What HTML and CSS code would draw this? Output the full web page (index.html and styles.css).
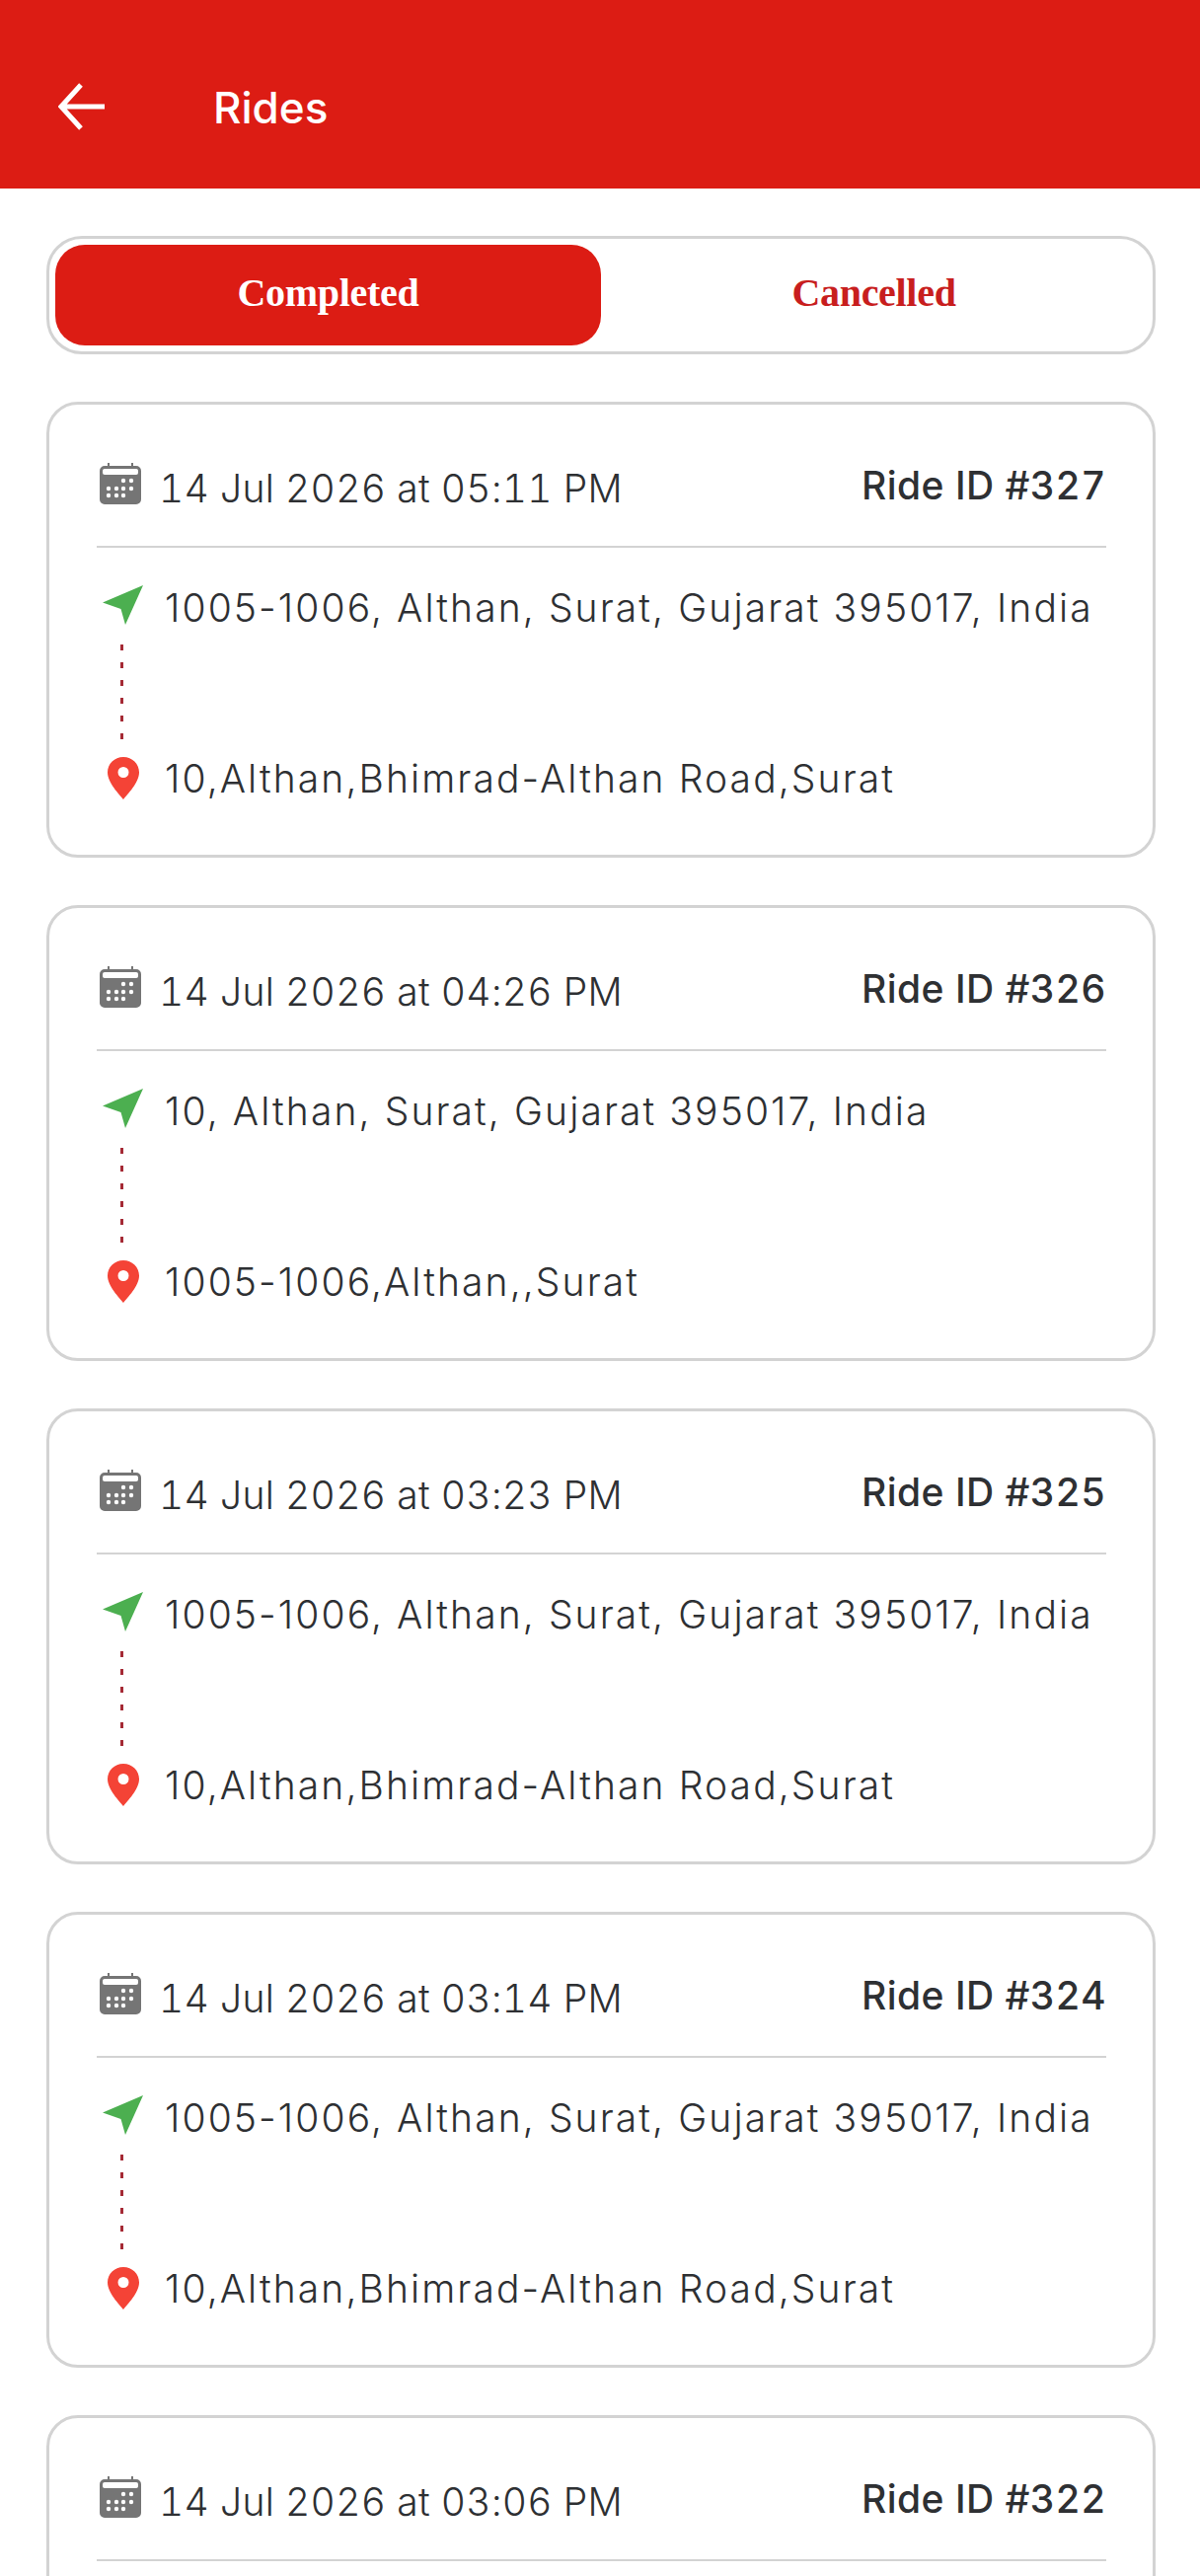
FILE: index.html
```html
<!DOCTYPE html>
<html lang="en">
<head>
<meta charset="utf-8">
<title>Rides</title>
<link rel="stylesheet" href="styles.css">
</head>
<body>
<svg class="defs" width="0" height="0" aria-hidden="true">
  <symbol id="i-cal" viewBox="0 0 42 42">
    <path fill="#757575" d="M8 0h2v3h22V0h2v3h3a5 5 0 0 1 5 5v29a5 5 0 0 1-5 5H5a5 5 0 0 1-5-5V8a5 5 0 0 1 5-5h3z"/>
    <rect x="3" y="6" width="36" height="6" rx="2" fill="#fff"/>
    <g fill="#fff">
      <circle cx="24" cy="18" r="2.2"/><circle cx="32" cy="18" r="2.2"/>
      <circle cx="9" cy="26" r="2.2"/><circle cx="17" cy="26" r="2.2"/><circle cx="24" cy="26" r="2.2"/><circle cx="32" cy="26" r="2.2"/>
      <circle cx="9" cy="33" r="2.2"/><circle cx="17" cy="33" r="2.2"/><circle cx="24" cy="33" r="2.2"/>
    </g>
  </symbol>
  <symbol id="i-nav" viewBox="0 0 41 40">
    <path fill="#4caf50" d="M41 0 23 40 18.500 24 0 17.500z"/>
  </symbol>
  <symbol id="i-pin" viewBox="0 0 32 43">
    <path fill="#f44336" fill-rule="evenodd" d="M16 0c9 0 16 7 16 15.500C32 26 20 38 16 43 12 38 0 26 0 15.500 0 7 7 0 16 0zm0 10a5.500 5.500 0 1 0 0 11 5.500 5.500 0 0 0 0-11z"/>
  </symbol>
</svg>

<header class="bar">
  <svg class="back" viewBox="0 0 48 48" width="48" height="48" aria-hidden="true"><path d="M47 24H4M23 2 3 24l20 22" fill="none" stroke="#fff" stroke-width="5"/></svg>
  <h1 class="title">Rides</h1>
</header>

<main class="content">
  <nav class="tabs">
    <div class="tab tab-on">Completed</div>
    <div class="tab">Cancelled</div>
  </nav>

  <article class="card">
    <div class="head">
      <div class="when"><svg class="ic-cal"><use href="#i-cal"/></svg><span>14 Jul 2026 at 05:11 PM</span></div>
      <div class="rid">Ride ID #327</div>
    </div>
    <div class="route">
      <div class="stop"><svg class="ic-nav"><use href="#i-nav"/></svg><span>1005-1006, Althan, Surat, Gujarat 395017, India</span></div>
      <div class="dots"></div>
      <div class="stop"><svg class="ic-pin"><use href="#i-pin"/></svg><span>10,Althan,Bhimrad-Althan Road,Surat</span></div>
    </div>
  </article>

  <article class="card">
    <div class="head">
      <div class="when"><svg class="ic-cal"><use href="#i-cal"/></svg><span>14 Jul 2026 at 04:26 PM</span></div>
      <div class="rid">Ride ID #326</div>
    </div>
    <div class="route">
      <div class="stop"><svg class="ic-nav"><use href="#i-nav"/></svg><span>10, Althan, Surat, Gujarat 395017, India</span></div>
      <div class="dots"></div>
      <div class="stop"><svg class="ic-pin"><use href="#i-pin"/></svg><span>1005-1006,Althan,,Surat</span></div>
    </div>
  </article>

  <article class="card">
    <div class="head">
      <div class="when"><svg class="ic-cal"><use href="#i-cal"/></svg><span>14 Jul 2026 at 03:23 PM</span></div>
      <div class="rid">Ride ID #325</div>
    </div>
    <div class="route">
      <div class="stop"><svg class="ic-nav"><use href="#i-nav"/></svg><span>1005-1006, Althan, Surat, Gujarat 395017, India</span></div>
      <div class="dots"></div>
      <div class="stop"><svg class="ic-pin"><use href="#i-pin"/></svg><span>10,Althan,Bhimrad-Althan Road,Surat</span></div>
    </div>
  </article>

  <article class="card">
    <div class="head">
      <div class="when"><svg class="ic-cal"><use href="#i-cal"/></svg><span>14 Jul 2026 at 03:14 PM</span></div>
      <div class="rid">Ride ID #324</div>
    </div>
    <div class="route">
      <div class="stop"><svg class="ic-nav"><use href="#i-nav"/></svg><span>1005-1006, Althan, Surat, Gujarat 395017, India</span></div>
      <div class="dots"></div>
      <div class="stop"><svg class="ic-pin"><use href="#i-pin"/></svg><span>10,Althan,Bhimrad-Althan Road,Surat</span></div>
    </div>
  </article>

  <article class="card">
    <div class="head">
      <div class="when"><svg class="ic-cal"><use href="#i-cal"/></svg><span>14 Jul 2026 at 03:06 PM</span></div>
      <div class="rid">Ride ID #322</div>
    </div>
  </article>
</main>
</body>
</html>
```

FILE: styles.css
```css
* { box-sizing: border-box; }
html, body {
  margin: 0;
  height: 2610px;
  overflow: hidden;
  background: #fff;
}
body {
  font-family: Inter, Roboto, "Liberation Sans", sans-serif;
  color: #2e3033;
}
.defs { display: block; height: 0; }

.bar {
  height: 191px;
  background: #dc1c14;
  display: flex;
  align-items: center;
  padding: 0 0 0 59px;
}
.back { flex: none; margin-top: 24px; }
.title {
  margin: 26px 0 0 109px;
  font-size: 44px;
  font-weight: 500;
  color: #fff;
  line-height: 48px;
}

.content {
  padding: 48px 45px 0 47px;
  display: flex;
  flex-direction: column;
  gap: 48px;
}

.tabs {
  height: 120px;
  border: 3px solid #d3d3d3;
  border-radius: 36px;
  padding: 6px;
  display: grid;
  grid-template-columns: 1fr 1fr;
}
.tab {
  display: flex;
  align-items: center;
  justify-content: center;
  padding-bottom: 5px;
  font-family: "Liberation Serif", serif;
  font-weight: 700;
  font-size: 40px;
  letter-spacing: -0.3px;
  color: #c81e1e;
  border-radius: 30px;
}
.tab-on {
  background: #dc1c14;
  color: #fff;
}

.card {
  height: 462px;
  border: 3px solid #d3d3d3;
  border-radius: 32px;
  padding: 0 47px 0 48px;
}
.head {
  height: 145px;
  border-bottom: 2px solid #d3d3d3;
  display: flex;
  justify-content: space-between;
  align-items: center;
  padding-top: 17px;
}
.when {
  display: flex;
  align-items: center;
  font-size: 39px;
  font-weight: 300;
  font-variant-numeric: tabular-nums;
  letter-spacing: 0.35px;
  line-height: 48px;
}
.when span { margin-left: 18px; margin-top: 10px; }
.ic-cal { width: 42px; height: 42px; margin-left: 3px; flex: none; }
.rid {
  font-size: 39px;
  font-weight: 500;
  font-variant-numeric: tabular-nums;
  letter-spacing: 0.45px;
  line-height: 48px;
  margin-top: 4px;
}

.route { padding-top: 37px; }
.stop {
  display: flex;
  align-items: center;
  height: 48px;
  font-size: 39px;
  font-weight: 300;
  letter-spacing: 2.1px;
  line-height: 48px;
  white-space: nowrap;
}
.ic-nav { width: 41px; height: 40px; margin: -6px 22px 0 6px; flex: none; }
.ic-pin { width: 32px; height: 43px; margin: -2px 26px 0 11px; flex: none; }
.dots {
  width: 3px;
  height: 97px;
  margin: 13px 0 15px 24px;
  background: repeating-linear-gradient(to bottom, #a52a35 0 6px, transparent 6px 18px);
}
```
